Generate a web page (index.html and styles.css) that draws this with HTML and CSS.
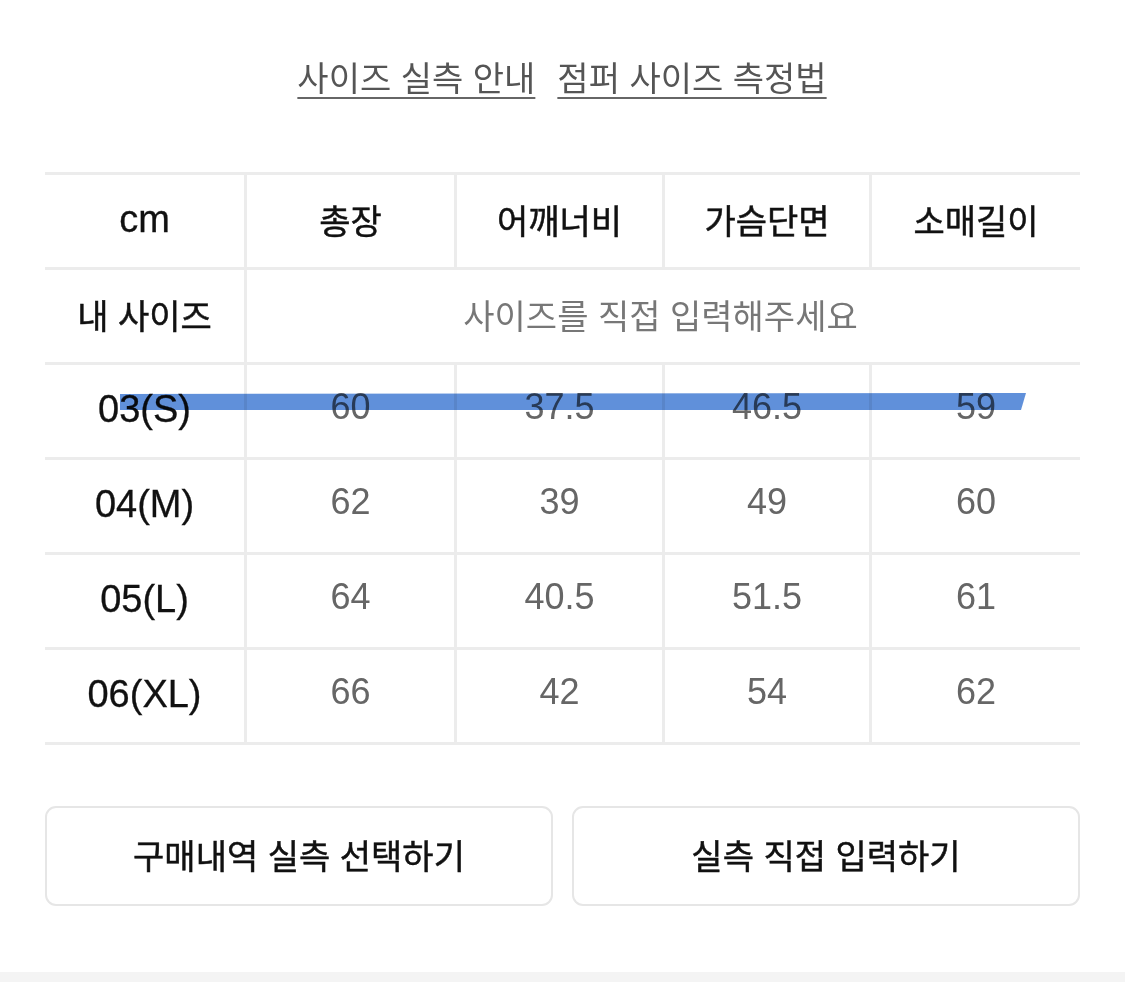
FILE: index.html
```html
<!DOCTYPE html>
<html lang="ko">
<head>
<meta charset="utf-8">
<link rel="stylesheet" href="styles.css">
</head>
<body>
<div class="page">
  <div class="links">
    <a class="link">사이즈 실측 안내</a>
    <a class="link">점퍼 사이즈 측정법</a>
  </div>
  <div class="table-wrap">
    <div class="table">
      <div class="cell head latin">cm</div>
      <div class="cell head">총장</div>
      <div class="cell head">어깨너비</div>
      <div class="cell head">가슴단면</div>
      <div class="cell head last">소매길이</div>

      <div class="cell head">내 사이즈</div>
      <div class="cell span last placeholder">사이즈를 직접 입력해주세요</div>

      <div class="cell head latin">03(S)</div>
      <div class="cell num">60</div>
      <div class="cell num">37.5</div>
      <div class="cell num">46.5</div>
      <div class="cell num last">59</div>

      <div class="cell head latin">04(M)</div>
      <div class="cell num">62</div>
      <div class="cell num">39</div>
      <div class="cell num">49</div>
      <div class="cell num last">60</div>

      <div class="cell head latin">05(L)</div>
      <div class="cell num">64</div>
      <div class="cell num">40.5</div>
      <div class="cell num">51.5</div>
      <div class="cell num last">61</div>

      <div class="cell head latin">06(XL)</div>
      <div class="cell num">66</div>
      <div class="cell num">42</div>
      <div class="cell num">54</div>
      <div class="cell num last">62</div>
    </div>
    <svg class="marker" width="906" height="18" viewBox="0 0 906 18">
      <path d="M0 1 L906 0 L901 17 L0 17 Z" fill="#6090da"/>
    </svg>
  </div>
  <div class="buttons">
    <button class="btn">구매내역 실측 선택하기</button>
    <button class="btn">실측 직접 입력하기</button>
  </div>
</div>
<div class="footer-strip"></div>
</body>
</html>
```
FILE: styles.css
```css
* { box-sizing: border-box; }
html, body { margin: 0; padding: 0; background: #fff; }
body {
  font-family: "Liberation Sans", "Noto Sans CJK KR", sans-serif;
  color: #111;
  width: 1125px;
  height: 982px;
  overflow: hidden;
  display: flex;
  flex-direction: column;
}
.page {
  flex: 1;
  padding: 54px 45px 0 45px;
}
.links {
  display: flex;
  justify-content: center;
  gap: 22px;
  height: 45px;
  line-height: 45px;
  font-family: "Noto Sans CJK KR", sans-serif;
  font-size: 34px;
  padding-right: 1px;
}
.link {
  color: #555;
  text-decoration: underline;
  text-decoration-thickness: 2px;
  text-underline-offset: 6px;
  text-decoration-color: #666;
}
.table-wrap {
  position: relative;
  margin-top: 73px;
}
.table {
  display: grid;
  grid-template-columns: 202px 210px 208px 207px 208px;
  grid-auto-rows: 95px;
  border-top: 3px solid #ececec;
}
.cell {
  display: flex;
  align-items: center;
  justify-content: center;
  border-right: 3px solid #ececec;
  border-bottom: 3px solid #ececec;
  font-family: "Noto Sans CJK KR", sans-serif;
  font-size: 34px;
  color: #111;
  padding-bottom: 4px;
}
.head { -webkit-text-stroke: 0.5px #111; }
.cell.last { border-right: none; }
.cell.span {
  grid-column: 2 / 6;
}
.placeholder { color: #777; padding-right: 6px; }
.latin {
  font-family: "Liberation Sans", "Noto Sans CJK KR", sans-serif;
  font-size: 38px;
  -webkit-text-stroke: 0.3px #111;
}
.num {
  font-family: "Liberation Sans", sans-serif;
  font-size: 36px;
  color: #666;
  padding-bottom: 8px;
}
.marker {
  position: absolute;
  left: 75px;
  top: 221px;
  mix-blend-mode: multiply;
}
.buttons {
  display: flex;
  gap: 19px;
  margin-top: 61px;
}
.btn {
  flex: 1;
  height: 100px;
  background: #fff;
  border: 2px solid #e6e6e6;
  border-radius: 11px;
  font-family: "Noto Sans CJK KR", sans-serif;
  font-size: 34px;
  color: #111;
  -webkit-text-stroke: 0.5px #111;
  padding: 0 0 4px 0;
}
.footer-strip {
  height: 10px;
  background: #f4f4f4;
}
```
